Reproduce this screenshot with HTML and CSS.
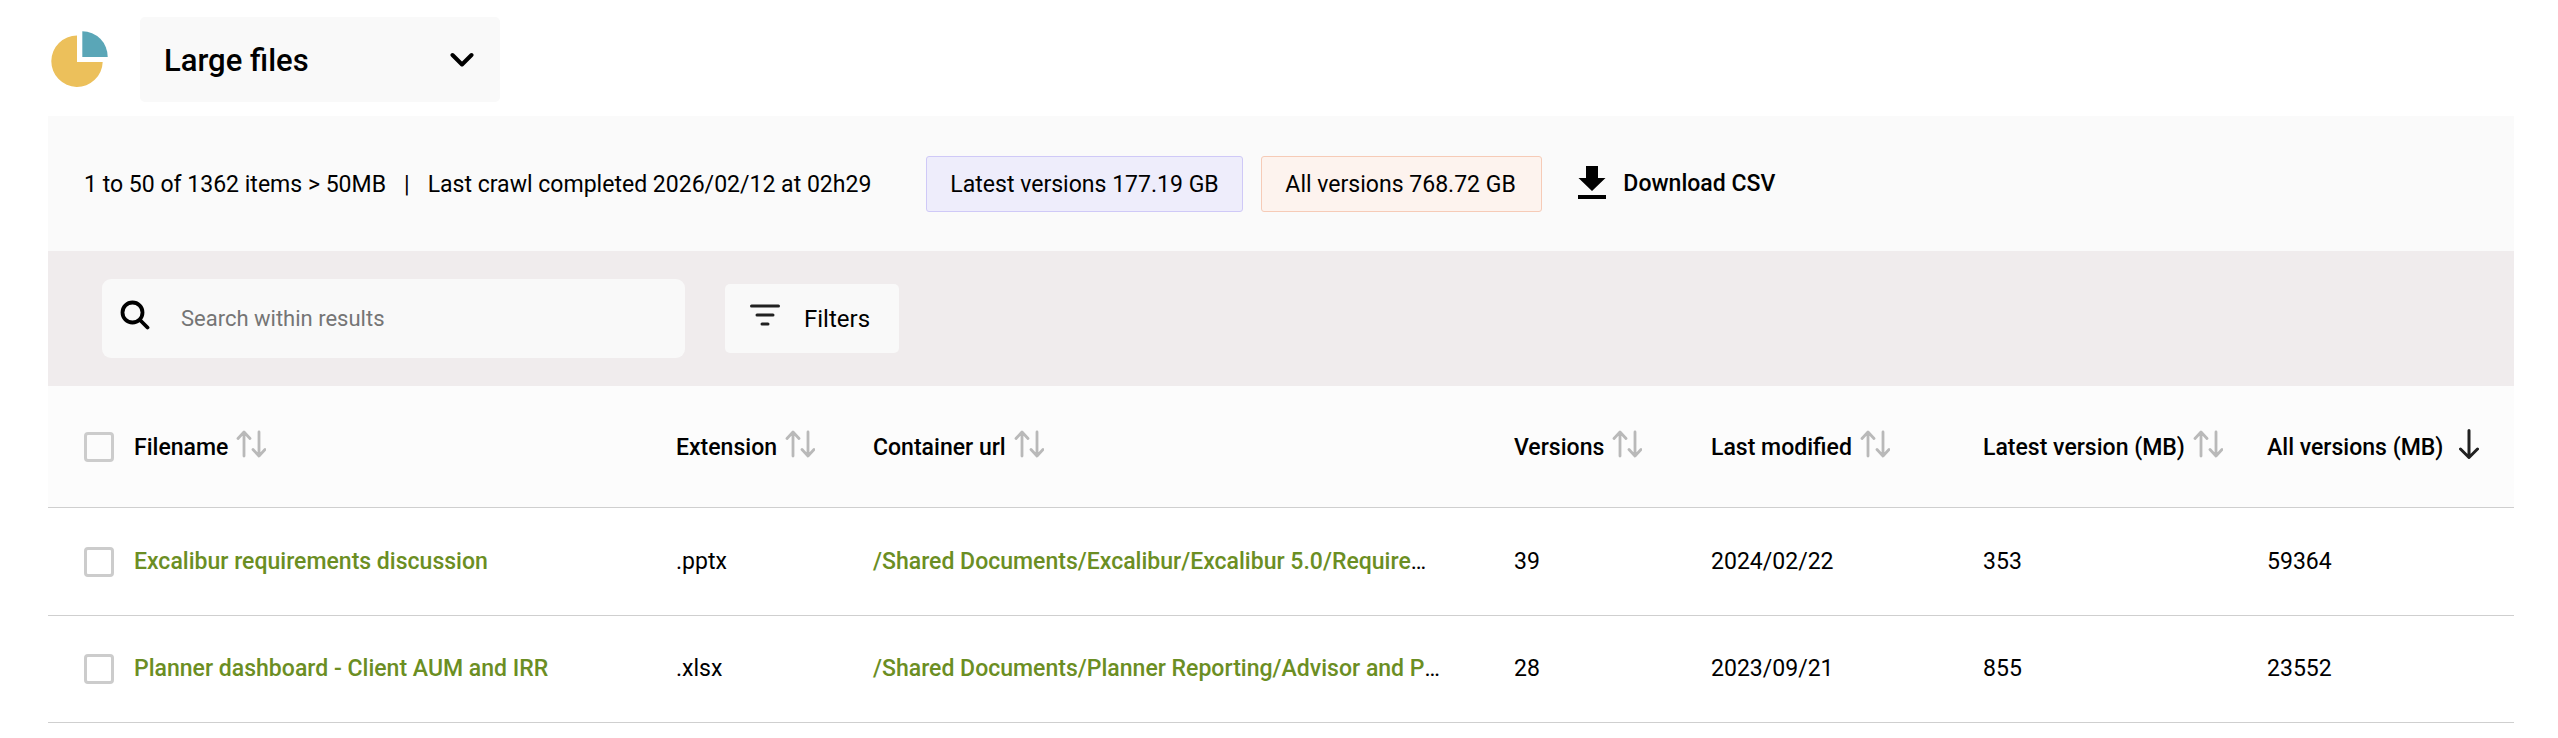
FILE: index.html
```html
<!DOCTYPE html>
<html lang="en">
<head>
    <meta charset="UTF-8">
    <meta name="viewport" content="width=device-width, initial-scale=1.0">
    <title>Large files</title>
    <link rel="stylesheet" href="styles.css">
</head>
<body>
    <!-- shared sort icon -->
    <svg class="sprite" width="0" height="0">
        <symbol id="sort" viewBox="0 0 30 28">
            <path d="M8 26V2.5M2 8.5l6-6.5 6 6.5M23 2v23.5M17 19.5l6 6.5 6-6.5"/>
        </symbol>
    </svg>

    <header class="header">
        <svg class="logo" width="58" height="58" viewBox="0 0 58 58">
            <path fill="#ecc05b" d="M26 6.5A25.7 25.7 0 1 0 51.7 33H26z"/>
            <path fill="#5aa6b7" d="M31.3 2.3A25.5 25.5 0 0 1 56.7 28H31.3z"/>
        </svg>
        <button class="report-select">
            <span>Large files</span>
            <svg width="24" height="16" viewBox="0 0 24 16">
                <path d="M2.5 3l9.5 9.5L21.5 3"/>
            </svg>
        </button>
    </header>

    <main class="panel">
        <div class="stats">
            <span class="count">1 to 50 of 1362 items &gt; 50MB</span>
            <span class="divider">|</span>
            <span class="crawl">Last crawl completed 2026/02/12 at 02h29</span>
            <span class="badge badge-latest">Latest versions 177.19 GB</span>
            <span class="badge badge-all">All versions 768.72 GB</span>
            <a class="download">
                <svg width="28" height="33" viewBox="0 0 28 33">
                    <path d="M8 0h12v12h7.5L14 25 .5 12H8zM0 29h28v4H0z"/>
                </svg>
                <span>Download CSV</span>
            </a>
        </div>

        <div class="toolbar">
            <label class="search">
                <svg width="30" height="30" viewBox="0 0 30 30">
                    <circle cx="12.500" cy="12.500" r="10"/>
                    <path d="M20 20l7.500 7.500"/>
                </svg>
                <input type="text" placeholder="Search within results">
            </label>
            <button class="filters">
                <svg width="30" height="22" viewBox="0 0 30 22">
                    <path d="M1.500 2h27M7 11h16M12 20h6"/>
                </svg>
                <span>Filters</span>
            </button>
        </div>

        <table class="files">
            <colgroup>
                <col class="col-check">
                <col class="col-name">
                <col class="col-ext">
                <col class="col-url">
                <col class="col-versions">
                <col class="col-modified">
                <col class="col-latest">
                <col>
            </colgroup>
            <thead>
                <tr>
                    <th class="check"><input type="checkbox"></th>
                    <th><div class="th">Filename <svg class="sort"><use href="#sort"/></svg></div></th>
                    <th><div class="th">Extension <svg class="sort"><use href="#sort"/></svg></div></th>
                    <th><div class="th">Container url <svg class="sort"><use href="#sort"/></svg></div></th>
                    <th><div class="th">Versions <svg class="sort"><use href="#sort"/></svg></div></th>
                    <th><div class="th">Last modified <svg class="sort"><use href="#sort"/></svg></div></th>
                    <th><div class="th">Latest version (MB) <svg class="sort"><use href="#sort"/></svg></div></th>
                    <th><div class="th">All versions (MB)
                        <svg class="sorted" viewBox="0 0 20 30"><path d="M10 1.500v26.500M1.500 20l8.500 8.500 8.500-8.500"/></svg>
                    </div></th>
                </tr>
            </thead>
            <tbody>
                <tr>
                    <td class="check"><input type="checkbox"></td>
                    <td><a class="link">Excalibur requirements discussion</a></td>
                    <td>.pptx</td>
                    <td><a class="link">/Shared Documents/Excalibur/Excalibur 5.0/Require</a>…</td>
                    <td>39</td>
                    <td>2024/02/22</td>
                    <td>353</td>
                    <td>59364</td>
                </tr>
                <tr>
                    <td class="check"><input type="checkbox"></td>
                    <td><a class="link">Planner dashboard - Client AUM and IRR</a></td>
                    <td>.xlsx</td>
                    <td><a class="link">/Shared Documents/Planner Reporting/Advisor and P</a>…</td>
                    <td>28</td>
                    <td>2023/09/21</td>
                    <td>855</td>
                    <td>23552</td>
                </tr>
            </tbody>
        </table>
    </main>
</body>
</html>
```

FILE: styles.css
```css
* {
    margin: 0;
    padding: 0;
    box-sizing: border-box;
}

body {
    font-family: Roboto, "Liberation Sans", sans-serif;
    font-size: 23.04px;
    line-height: 30px;
    color: #000;
    background: #fff;
}

button,
input {
    font: inherit;
    color: inherit;
    border: none;
}

.sprite {
    display: block;
}

.header {
    display: flex;
    align-items: flex-start;
    height: 116px;
    padding: 17px 0 0 51px;
}

.logo {
    margin: 12px 31px 0 0;
}

.report-select {
    display: flex;
    align-items: center;
    justify-content: space-between;
    width: 360px;
    height: 85px;
    padding: 0 26px 0 24px;
    border-radius: 5px;
    background: #f9f9f9;
    font-size: 31px;
    font-weight: 500;
}

.report-select span {
    padding-top: 2px;
}

.report-select svg {
    fill: none;
    stroke: #000;
    stroke-width: 4;
    stroke-linecap: round;
    stroke-linejoin: round;
}

.panel {
    width: 2466px;
    margin-left: 48px;
}

.stats {
    display: flex;
    align-items: center;
    height: 135px;
    padding-left: 36px;
    background: #fafafa;
    white-space: nowrap;
}

.count,
.divider,
.crawl {
    padding-top: 2px;
}

.divider {
    margin: 0 18px;
}

.badge {
    height: 56px;
    padding: 0 23px;
    border: 1px solid;
    border-radius: 3px;
    line-height: 56px;
}

.badge-latest {
    width: 317px;
    margin-left: 55px;
    background: #eeedfb;
    border-color: #cfc9f7;
}

.badge-all {
    width: 281px;
    margin-left: 18px;
    background: #fdf3ee;
    border-color: #f6cbb7;
}

.download {
    display: flex;
    align-items: center;
    margin: -2px 0 0 36px;
    font-weight: 500;
}

.download svg {
    margin-right: 17px;
}

.download span {
    padding-top: 2px;
}

.toolbar {
    display: flex;
    align-items: center;
    height: 135px;
    padding-left: 54px;
    background: #f0eced;
}

.search {
    display: flex;
    align-items: center;
    width: 583px;
    height: 79px;
    padding-left: 18px;
    border-radius: 9px;
    background: #f9f9f9;
}

.search svg {
    margin: -7px 31px 0 0;
    fill: none;
    stroke: #000;
    stroke-width: 3.8;
    stroke-linecap: round;
}

.search input {
    flex: 1;
    padding-top: 1px;
    background: none;
    font-size: 22px;
}

.search input::placeholder {
    color: #757575;
}

.filters {
    display: flex;
    align-items: center;
    width: 174px;
    height: 69px;
    margin-left: 40px;
    padding-left: 25px;
    border-radius: 5px;
    background: #f9f9f9;
    font-size: 24px;
}

.filters svg {
    margin: -7px 24px 0 0;
    stroke: #212121;
    stroke-width: 3;
    stroke-linecap: round;
}

.filters span {
    padding-top: 1px;
}

.files {
    width: 100%;
    table-layout: fixed;
    border-collapse: separate;
    border-spacing: 0;
}

.col-check { width: 86px; }
.col-name { width: 542px; }
.col-ext { width: 197px; }
.col-url { width: 641px; }
.col-versions { width: 197px; }
.col-modified { width: 272px; }
.col-latest { width: 284px; }

.files th,
.files td {
    border-bottom: 1px solid #cfcfcf;
    text-align: left;
    vertical-align: middle;
    white-space: nowrap;
}

.files th {
    height: 122px;
    background: #fcfcfc;
    font-weight: 500;
}

.files td {
    height: 108px;
}

.files tr:last-child td {
    height: 107px;
}

.files .check {
    padding-left: 36px;
}

.check input {
    display: block;
    appearance: none;
    width: 30px;
    height: 30px;
    border: 3px solid #ccc;
    border-radius: 4px;
}

.th {
    display: flex;
    align-items: center;
    padding-top: 2px;
}

.sort {
    width: 30px;
    height: 28px;
    margin: -7px 0 0 8px;
    fill: none;
    stroke: #b9b9b9;
    stroke-width: 2.8;
    stroke-linecap: round;
    stroke-linejoin: round;
}

.sorted {
    width: 20px;
    height: 30px;
    margin: -7px 0 0 16px;
    fill: none;
    stroke: #212121;
    stroke-width: 3;
    stroke-linecap: round;
    stroke-linejoin: round;
}

.link {
    color: #6b8e23;
    font-weight: 500;
}
```
